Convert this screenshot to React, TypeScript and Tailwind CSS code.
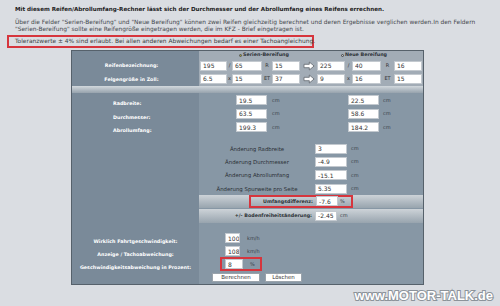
import React from 'react';

// small read-only field like the old calculator's text inputs
const Field = ({ value, w, className = '' }: { value: string; w: string; className?: string }) => (
  <input
    readOnly
    value={value}
    className={`${w} h-[10px] shrink-0 bg-white border border-[#c3c9cf] pl-[2px] text-[6px] leading-none text-[#333] outline-none ${className}`}
  />
);

const Arrow = () => (
  <svg width="12" height="10" viewBox="0 0 12 10" className="shrink-0">
    <path d="M1 3.3h5.3V1l4.8 4-4.8 4V6.7H1z" fill="#fff" stroke="#5f666d" strokeWidth="0.8" strokeLinejoin="round" />
  </svg>
);

const Sep = ({ children, w }: { children: React.ReactNode; w: string }) => (
  <span className={`${w} shrink-0 text-center text-[5px] text-[#333]`}>{children}</span>
);

const Unit = ({ children, className = '' }: { children: React.ReactNode; className?: string }) => (
  <span className={`text-[5px] text-[#3a4148] ${className}`}>{children}</span>
);

const Label = ({ children, className = '' }: { children: React.ReactNode; className?: string }) => (
  <span className={`text-[4.8px] font-bold text-white ${className}`}>{children}</span>
);

export default function App() {
  const changes = [
    ['Änderung Radbreite', '3'],
    ['Änderung Durchmesser', '-4.9'],
    ['Änderung Abrollumfang', '-15.1'],
    ['Änderung Spurweite pro Seite', '5.35'],
  ];

  return (
    <div className="w-[500px] h-[306px] overflow-hidden bg-[#dadde2] font-['DejaVu_Sans',sans-serif] text-[#3b3f44]">
      {/* intro text */}
      <div className="pl-[7px] pt-[6px]">
        <p className="pl-[8px] text-[5.6px] leading-[7px] font-bold text-[#222] whitespace-nowrap">
          Mit diesem Reifen/Abrollumfang-Rechner lässt sich der Durchmesser und der Abrollumfang eines Reifens errechnen.
        </p>
        <p className="mt-[6px] pl-[8px] text-[5.9px] leading-[7px] text-[#45494e] whitespace-nowrap">
          Über die Felder "Serien-Bereifung" und "Neue Bereifung" können zwei Reifen gleichzeitig berechnet und deren Ergebnisse verglichen werden.In den Feldern
          <br />
          "Serien-Bereifung" sollte eine Reifengröße eingetragen werden, die im KFZ - Brief eingetragen ist.
        </p>
        <div className="mt-[1.5px] w-[307px] h-[13px] border-2 border-[#d6353d] pl-[6px] flex items-center">
          <span className="text-[5.9px] text-[#3b3f44] whitespace-nowrap">
            Toleranzwerte ± 4% sind erlaubt. Bei allen anderen Abweichungen bedarf es einer Tachoangleichung.
          </span>
        </div>
      </div>

      {/* calculator panel */}
      <div className="ml-[71px] mt-[2px] w-[353px] h-[235px] border border-[#56616b] flex flex-col overflow-hidden bg-[linear-gradient(to_right,#7a8a99_127px,#8797a5_127px)]">
        {/* tyre inputs */}
        <div className="flex h-[35px]">
          <div className="w-[127px] flex flex-col items-center pr-[8px] pt-[10px] gap-[4px]">
            <Label className="leading-[10px]">Reifenbezeichnung:</Label>
            <Label className="leading-[10px]">Felgengröße in Zoll:</Label>
          </div>
          <div className="flex-1 bg-[#a2acb6] flex flex-col">
            <div className="h-[9px] flex items-center">
              <span className="ml-[40px] w-[3px] h-[3px] rounded-full bg-[#9c9c3c] border-[0.5px] border-[#555]" />
              <span className="ml-[1px] text-[4.8px] font-bold text-[#2c3136]">Serien-Bereifung</span>
              <span className="ml-[52px] w-[3px] h-[3px] rounded-full bg-[#c8c8c8] border-[0.5px] border-[#444]" />
              <span className="ml-[1px] text-[4.8px] font-bold text-[#2c3136]">Neue Bereifung</span>
            </div>
            <div className="mt-[1px] h-[10px] flex items-center pl-[1px]">
              <Field value="195" w="w-[27px]" />
              <Sep w="w-[5px]">/</Sep>
              <Field value="65" w="w-[30px]" />
              <Sep w="w-[10px]">R</Sep>
              <Field value="15" w="w-[28px]" />
              <span className="w-[17px] flex justify-center"><Arrow /></span>
              <Field value="225" w="w-[28px]" />
              <Sep w="w-[7px]">/</Sep>
              <Field value="40" w="w-[29px]" />
              <Sep w="w-[13px]">R</Sep>
              <Field value="16" w="w-[28px]" />
            </div>
            <div className="mt-[3px] h-[10px] flex items-center pl-[1px]">
              <Field value="6.5" w="w-[27px]" />
              <Sep w="w-[5px]">x</Sep>
              <Field value="15" w="w-[30px]" />
              <Sep w="w-[10px]">ET</Sep>
              <Field value="37" w="w-[28px]" />
              <span className="w-[17px] flex justify-center"><Arrow /></span>
              <Field value="9" w="w-[28px]" />
              <Sep w="w-[7px]">x</Sep>
              <Field value="16" w="w-[29px]" />
              <Sep w="w-[13px]">ET</Sep>
              <Field value="15" w="w-[28px]" />
            </div>
          </div>
        </div>

        <div className="h-[7px] shrink-0 bg-linear-to-b from-[#d2d8dd] to-[#97a3ad]" />

        {/* results */}
        <div className="pt-[1px] flex flex-col">
          {[
            ['Radbreite:', '19.5', '22.5'],
            ['Durchmesser:', '63.5', '58.6'],
            ['Abrollumfang:', '199.3', '184.2'],
          ].map(([label, a, b]) => (
            <div key={label} className="h-[13.5px] flex items-center">
              <div className="w-[127px] pl-[41px]"><Label>{label}</Label></div>
              <div className="w-[37px]" />
              <Field value={a} w="w-[31px]" />
              <Unit className="w-[81px] pl-[5px]">cm</Unit>
              <Field value={b} w="w-[31px]" />
              <Unit className="pl-[4px]">cm</Unit>
            </div>
          ))}
        </div>

        <div className="mt-[8px] flex flex-col">
          {changes.map(([label, v]) => (
            <div key={label} className="h-[13.33px] flex items-center">
              <div className="w-[127px]" />
              <span className="w-[116px] text-center text-[5.4px] text-[#2b3035] whitespace-nowrap">{label}</span>
              <Field value={v} w="w-[32px]" />
              <Unit className="pl-[4px]">cm</Unit>
            </div>
          ))}
        </div>

        {/* differences */}
        <div className="flex h-[13px] mt-[-0.5px]">
          <div className="w-[127px]" />
          <div className="flex-1 bg-linear-to-b from-[#cdd3d8] to-[#98a4ae] flex items-center">
            <div className="ml-[50px] w-[104px] h-[13px] border-2 border-[#d6353d] flex items-center">
              <span className="w-[62px] text-right text-[4.8px] font-bold text-[#2b3035]">Umfangsdifferenz:</span>
              <Field value="-7.6" w="w-[22px]" className="ml-[3px]" />
              <Unit className="pl-[2px]">%</Unit>
            </div>
          </div>
        </div>
        <div className="flex h-[14px] mt-[1px]">
          <div className="w-[127px]" />
          <div className="flex-1 bg-linear-to-b from-[#cdd3d8] to-[#98a4ae] flex items-center">
            <span className="w-[113px] text-right text-[4.8px] font-bold text-[#2b3035]">+/- Bodenfreiheitsänderung:</span>
            <Field value="-2.45" w="w-[22px]" className="ml-[3px]" />
            <Unit className="pl-[3px]">cm</Unit>
          </div>
        </div>

        {/* speed */}
        <div className="mt-[9px] flex flex-col">
          <div className="h-[13px] flex items-center">
            <div className="w-[127px] text-center"><Label>Wirklich Fahrtgeschwindigkeit:</Label></div>
            <Field value="100" w="w-[15px]" className="ml-[26px]" />
            <Unit className="pl-[7px]">km/h</Unit>
          </div>
          <div className="h-[13px] flex items-center">
            <div className="w-[127px] text-center"><Label>Anzeige / Tachoabweichung:</Label></div>
            <Field value="108" w="w-[15px]" className="ml-[26px]" />
            <Unit className="pl-[7px]">km/h</Unit>
          </div>
          <div className="h-[13px] flex items-center">
            <div className="w-[127px] text-center"><Label>Geschwindigkeitsabweichung in Prozent:</Label></div>
            <div className="ml-[21px] w-[42px] h-[14px] border-2 border-[#d6353d] flex items-center pl-[3px]">
              <Field value="8" w="w-[18px]" />
              <Unit className="pl-[7px]">%</Unit>
            </div>
          </div>
          <div className="mt-[2px] flex items-center gap-[5px] pl-[140px]">
            <button className="w-[48px] h-[9px] bg-white border border-[#9aa3ab] text-[5.5px] leading-none text-[#333]">Berechnen</button>
            <button className="w-[37px] h-[9px] bg-white border border-[#9aa3ab] text-[5.5px] leading-none text-[#333]">Löschen</button>
          </div>
        </div>
      </div>

      {/* watermark */}
      <div className="flex justify-end pr-[7px] mt-[4px]">
        <span className="font-['Liberation_Sans',sans-serif] font-bold text-[13px] leading-[14px] text-white [-webkit-text-stroke:2px_#8c939a] [paint-order:stroke_fill]">
          www.MOTOR-TALK.de
        </span>
      </div>
    </div>
  );
}
